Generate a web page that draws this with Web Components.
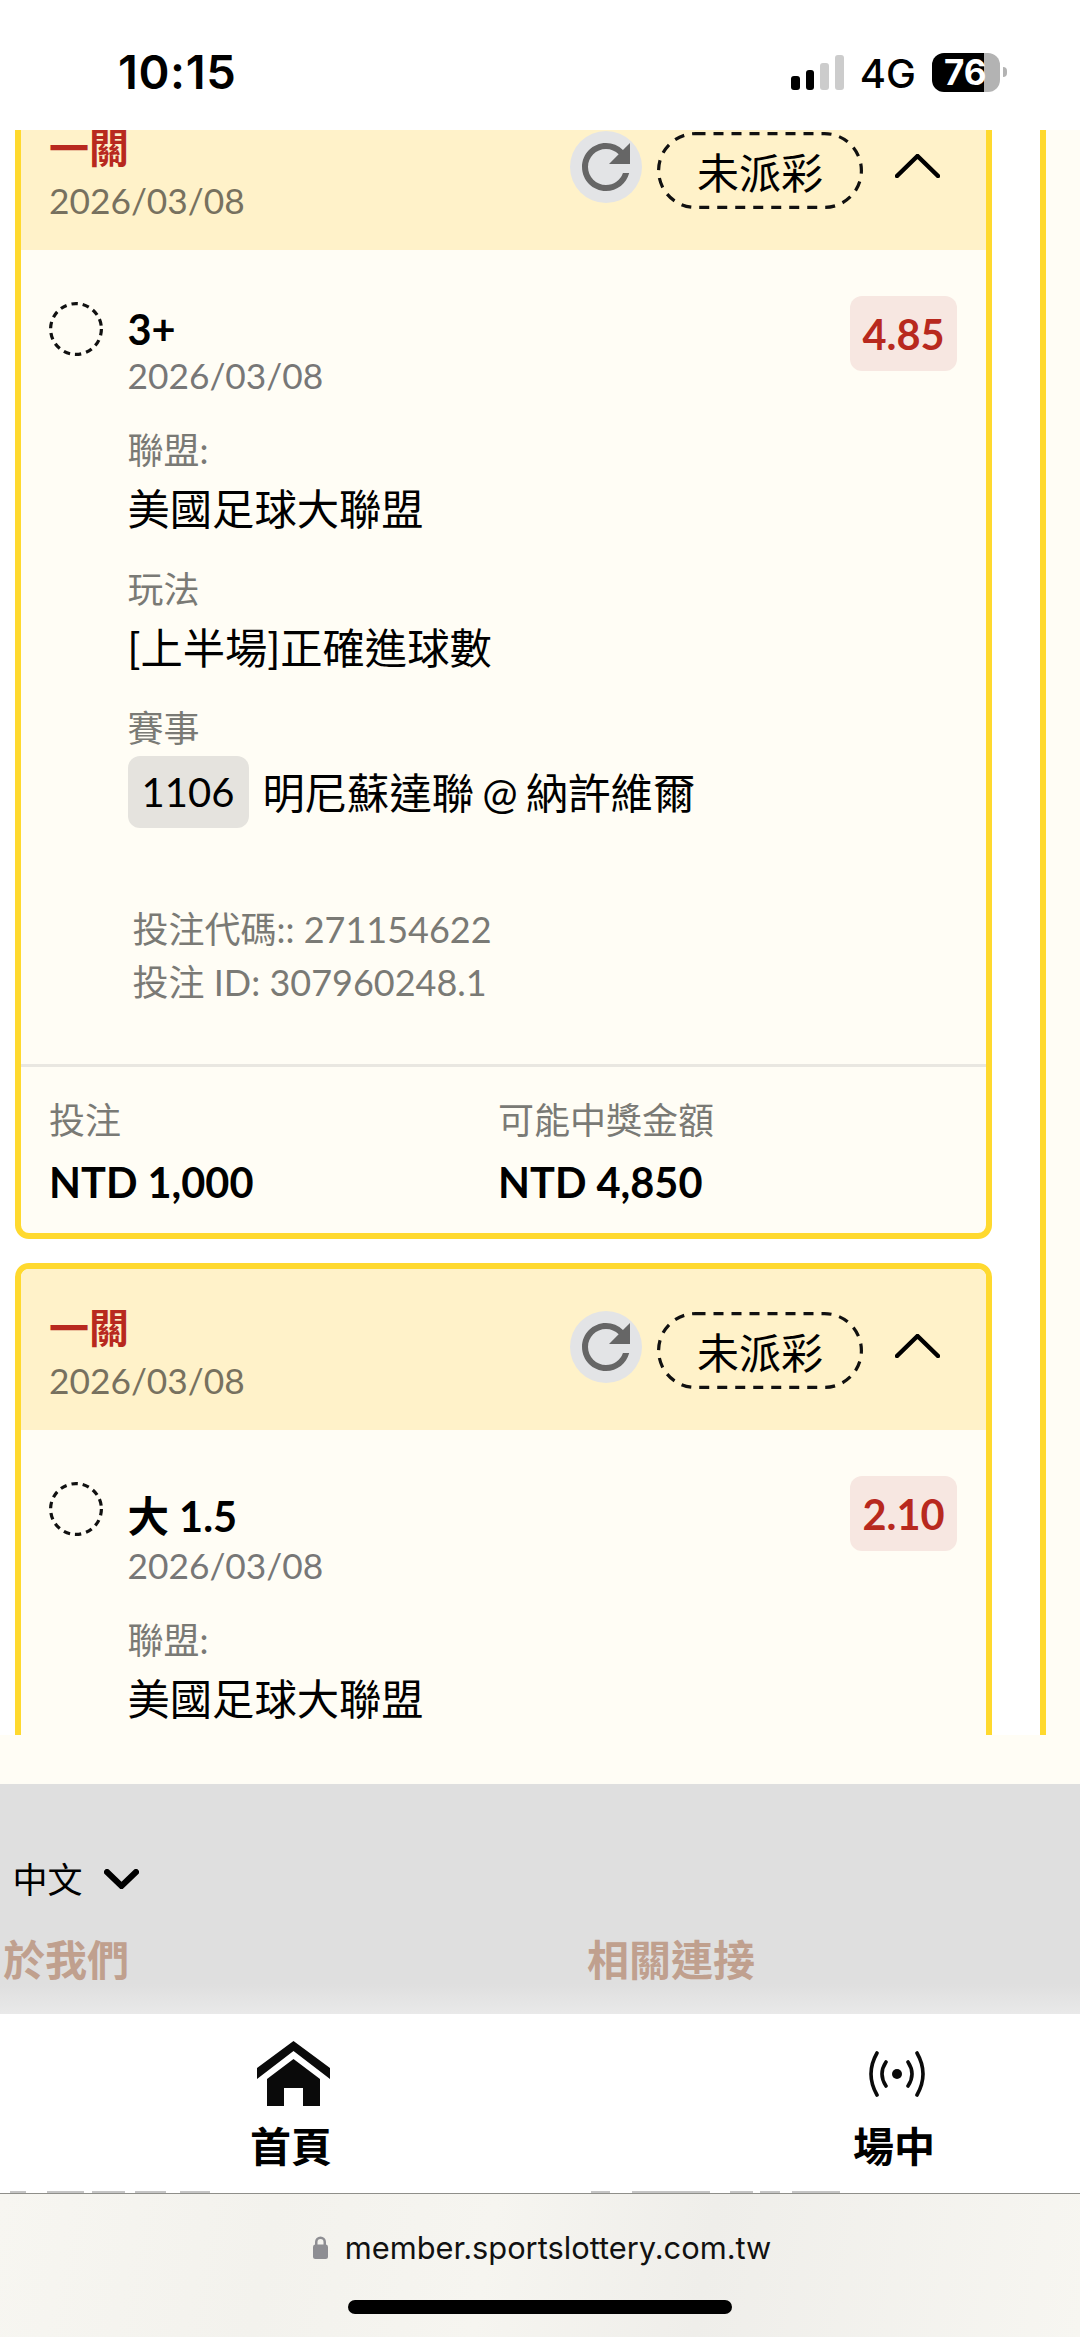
<!DOCTYPE html>
<html lang="zh-Hant"><head><meta charset="utf-8"><title>投注紀錄</title>
<style>
html,body{margin:0;padding:0;background:#fff}
body{font-family:Lato,"Noto Sans CJK TC",sans-serif;color:#000;width:1080px;height:2337px;overflow:hidden}
</style></head><body>
<app-shell>
  <status-bar slot="status"></status-bar>
  <bet-card slot="cards" kind="一關" date="2026/03/08" status="未派彩" style="margin-top:-47px">
    <bet-leg pick="3+" date="2026/03/08" odds="4.85">
      <info-row label="聯盟:">美國足球大聯盟</info-row>
      <info-row label="玩法">[上半場]正確進球數</info-row>
      <info-row label="賽事"><event-tag>1106</event-tag>明尼蘇達聯 @ 納許維爾</info-row>
    </bet-leg>
    <bet-codes code="271154622" bet="307960248.1"></bet-codes>
    <bet-total slot="foot" stake="NTD 1,000" payout="NTD 4,850"></bet-total>
  </bet-card>
  <bet-card slot="cards" kind="一關" date="2026/03/08" status="未派彩" continues>
    <bet-leg pick="大 1.5" date="2026/03/08" odds="2.10">
      <info-row label="聯盟:">美國足球大聯盟</info-row>
    </bet-leg>
  </bet-card>
  <site-footer slot="footer"></site-footer>
  <tab-bar slot="tabs"></tab-bar>
  <url-bar slot="url"></url-bar>
</app-shell>
<script>
const FONT='Lato,"Noto Sans CJK TC",sans-serif';
function def(name,html){
  customElements.define(name,class extends HTMLElement{
    constructor(){super();this.attachShadow({mode:'open'})}
    connectedCallback(){
      const a=n=>this.getAttribute(n)||'';
      this.shadowRoot.innerHTML=typeof html==='function'?html(a):html;
    }
  });
}
def('app-shell',`<style>
:host{display:flex;flex-direction:column;width:1080px;height:2337px;background:#fff;overflow:hidden}
.scroll{flex:none;height:1605px;display:flex;gap:48px;padding-left:15px;overflow:hidden;background:#fff;box-sizing:border-box}
.col{flex:none;width:977px;display:flex;flex-direction:column;gap:24px}
.peek{flex:none;width:200px;border-left:6px solid #ffd92e;background:#fffdf5}
.band{flex:none;height:49px;background:#fffdf5}
</style>
<slot name="status"></slot>
<div class="scroll"><div class="col"><slot name="cards"></slot></div><div class="peek"></div></div>
<div class="band"></div>
<slot name="footer"></slot><slot name="tabs"></slot><slot name="url"></slot>`);

def('status-bar',`<style>
:host{flex:none;display:flex;justify-content:space-between;height:130px;box-sizing:border-box;padding:42px 73px 0 118px;background:#fff;font-family:Inter,sans-serif;color:#000}
.time{font-size:47px;font-weight:600;line-height:60px;letter-spacing:.6px}
.right{display:flex;align-items:center;height:60px}
.sig{display:flex;align-items:flex-end;gap:6px;width:53px;height:35px;margin-right:16px}
.sig i{display:block;width:9px;border-radius:3px;background:#000}
.sig i.off{background:#ccc}
.g{font-size:40px;font-weight:500;line-height:46px;margin-right:16px;position:relative;top:2px}
.bat{width:68px;height:39px;box-sizing:border-box;padding-left:12px;border-radius:12px;background:linear-gradient(90deg,#000 52px,#b3b3b3 52px);color:#fff;font-weight:700;font-size:35px;line-height:39px}
.nub{width:4px;height:10px;margin-left:3px;border-radius:0 5px 5px 0;background:#b3b3b3}
</style>
<div class="time">10:15</div>
<div class="right"><div class="sig"><i style="height:14px"></i><i style="height:20px"></i><i class="off" style="height:27px"></i><i class="off" style="height:35px"></i></div><div class="g">4G</div><div class="bat">76</div><div class="nub"></div></div>`);

def('bet-card',a=>`<style>
:host{display:block;flex:none;box-sizing:border-box;border:6px solid #ffd92e;border-radius:14px;background:#fffdf5;overflow:hidden;font-family:${FONT}}
:host([continues]){min-height:600px}
header{display:flex;justify-content:space-between;height:161px;box-sizing:border-box;padding:30px 46px 0 28px;background:#fff2c9}
.kind{font-size:40px;font-weight:700;line-height:58px;color:#b8291e}
.date{font-size:35.3px;line-height:43px;margin-top:2px;color:#77715f}
.acts{display:flex;align-items:flex-start;margin-top:12px}
.re{width:72px;height:72px;border-radius:50%;background:#e3e4e6;display:block;margin-right:15px}
.re svg{display:block;width:72px;height:72px;fill:#666}
.pill{position:relative;box-sizing:border-box;width:206px;height:77px;margin-top:1px;display:flex;align-items:center;justify-content:center;font-size:42px;color:#000}
.pill svg{position:absolute;left:0;top:0;width:206px;height:77px;fill:none;stroke:#111;stroke-width:3.2;stroke-dasharray:10 8}
.chev{display:block;width:45px;height:24px;margin:23px 0 0 32px;fill:none;stroke:#000;stroke-width:4.5;stroke-linecap:round;stroke-linejoin:round}
.foot{display:block;border-top:3px solid #e9e7e1}
:host([continues]) .foot{display:none}
</style>
<header><div><div class="kind">${a('kind')}</div><div class="date">${a('date')}</div></div>
<div class="acts"><div class="re"><svg viewBox="0 0 24 24"><path d="M17.65 6.35A7.958 7.958 0 0 0 12 4c-4.42 0-7.99 3.58-7.99 8s3.57 8 7.99 8c3.73 0 6.84-2.55 7.73-6h-2.08A5.99 5.99 0 0 1 12 18c-3.31 0-6-2.69-6-6s2.69-6 6-6c1.66 0 3.14.69 4.22 1.78L13 11h7V4l-2.35 2.35z"/></svg></div><div class="pill"><svg viewBox="0 0 206 77"><rect x="1.6" y="1.6" width="202.800" height="73.800" rx="36.900"/></svg>${a('status')}</div><svg class="chev" viewBox="0 0 45 24"><path d="M2 22 22.5 2 43 22"/></svg></div></header>
<slot></slot><div class="foot"><slot name="foot"></slot></div>`);

def('bet-leg',a=>`<style>
:host{display:flex;align-items:flex-start;padding:46px 29px 0 28px;font-family:${FONT}}
.ring{flex:none;display:block;width:54px;height:54px;margin:6px 24.5px 0 0;fill:none;stroke:#111;stroke-width:3.2;stroke-dasharray:6.500 4.930}
.main{flex:1;min-width:0;padding-top:8px}
.pick{font-size:41.5px;font-weight:700;color:#000}
.date{font-size:35.3px;line-height:43px;margin:0 0 27px;color:#777}
.odds{flex:none;width:107px;height:75px;border-radius:12px;background:#f7e7e1;color:#b8291e;font-size:41.5px;font-weight:700;display:flex;align-items:center;justify-content:center}
</style>
<svg class="ring" viewBox="0 0 54 54"><circle cx="27" cy="27" r="25.400"/></svg>
<div class="main"><div class="pick">${a('pick')}</div><div class="date">${a('date')}</div><slot></slot></div>
<div class="odds">${a('odds')}</div>`);

def('info-row',a=>`<style>
:host{display:block;margin-bottom:24px;font-family:${FONT}}
.l{font-size:36px;line-height:52px;color:#7a7a75}
.v{display:flex;align-items:center;font-size:42.3px;line-height:61px;margin-top:2px;color:#000;white-space:pre;word-spacing:-2.5px}
</style><div class="l">${a('label')}</div><div class="v"><slot></slot></div>`);

def('event-tag',`<style>
:host{display:flex;align-items:center;justify-content:center;flex:none;width:121px;height:72px;margin:0 14px 0 0;border-radius:12px;background:#e5e3de;font-size:40px;color:#000;font-family:${FONT}}
</style><slot></slot>`);

def('bet-codes',a=>`<style>
:host{display:block;padding:51px 0 55px 111.500px;font-family:${FONT};font-size:36px;line-height:53px;color:#7a7a75}
</style><div>投注代碼:: ${a('code')}</div><div>投注 ID: ${a('bet')}</div>`);

def('bet-total',a=>`<style>
:host{display:grid;grid-template-columns:449px 1fr;padding:27px 28px 27px;font-family:${FONT}}
.l{font-size:36px;line-height:52px;color:#7a7a75}
.v{font-size:41.5px;font-weight:700;line-height:48px;margin-top:12px;color:#000}
</style><div><div class="l">投注</div><div class="v">${a('stake')}</div></div><div><div class="l">可能中獎金額</div><div class="v">${a('payout')}</div></div>`);

def('site-footer',`<style>
:host{flex:none;display:block;height:230px;box-sizing:border-box;padding:70px 0 0 0;overflow:hidden;background:linear-gradient(#dfdfdf 0,#dfdfdf 200px,#e9e9e9 230px);font-family:${FONT}}
.lang{display:flex;align-items:center;padding-left:12.500px;font-size:35px;line-height:50px;color:#000;height:50px}
.lang svg{display:block;width:35px;height:20px;margin-left:21px;fill:none;stroke:#000;stroke-width:6;stroke-linejoin:miter;stroke-linecap:round}
.links{display:grid;grid-template-columns:584px 1fr;padding:26px 0 0 3px;font-size:42px;font-weight:700;line-height:61px;color:#c0a08e}
</style>
<div class="lang">中文<svg viewBox="0 0 35 20"><path d="M3 3 17.5 17 32 3"/></svg></div>
<div class="links"><div>於我們</div><div>相關連接</div></div>`);

def('tab-item',a=>`<style>
:host{display:flex;flex-direction:column;align-items:center;width:82px;font-family:${FONT}}
.i{height:66px;display:flex;align-items:center;justify-content:center;padding-left:5px}
.t{margin-top:11px;font-size:41px;font-weight:700;line-height:58px;white-space:nowrap;color:#000}
</style><div class="i"><slot></slot></div><div class="t">${a('label')}</div>`);

def('tab-bar',`<style>
:host{flex:none;display:flex;flex-direction:column;justify-content:space-between;height:179px;background:#fff;box-sizing:border-box;padding-top:27px}
.items{display:flex;gap:521px;padding-left:250px}
svg{display:block}
.strip{display:flex;height:2px}
.strip i{display:block;height:2px;background:#c4c4c4}
.strip b{display:block;height:2px}
</style>
<div class="items">
<tab-item label="首頁"><svg width="74" height="66" viewBox="0 0 74 66" fill="#0a0a0a"><path d="M36.500 0 73 27v11L36.500 10 0 38V27z"/><path d="M36.500 18 63 38v27H46V47H27v18H10V38z"/></svg></tab-item>
<tab-item label="場中"><svg width="58" height="46" viewBox="0 0 58 46" fill="none" stroke="#0a0a0a" stroke-width="3.600" stroke-linecap="round"><circle cx="29" cy="23" r="5" fill="#0a0a0a" stroke="none"/><path d="M18 11Q10 23 18 35M40 11Q48 23 40 35M9 2Q-3 23 9 44M49 2Q61 23 49 44"/></svg></tab-item>
</div>
<div class="strip"><b style="width:10px"></b><i style="width:16px"></i><b style="width:21px"></b><i style="width:37px"></i><b style="width:8px"></b><i style="width:33px"></i><b style="width:10px"></b><i style="width:31px"></i><b style="width:14px"></b><i style="width:30px"></i><b style="width:381px"></b><i style="width:19px"></i><b style="width:22px"></b><i style="width:78px"></i><b style="width:20px"></b><i style="width:23px"></i><b style="width:7px"></b><i style="width:20px"></i><b style="width:12px"></b><i style="width:48px"></i></div>`);

def('url-bar',`<style>
:host{flex:none;display:block;height:144px;box-sizing:border-box;border-top:1px solid #8f8f8a;padding-top:33px;background:linear-gradient(100deg,#f7f6f1 0,#f3f2ed 25%,#f6f5f0 45%,#efeeea 65%,#f7f6f1 100%)}
.row{display:flex;justify-content:center;align-items:center;height:40px;gap:16px;padding-left:3px;font-family:Inter,sans-serif;font-size:30.8px;color:#111;white-space:nowrap}
svg{display:block;fill:#8e8e93}
.home{width:384px;height:14px;margin:33px auto 0;border-radius:7px;background:#000}
</style>
<div class="row"><svg width="17" height="23" viewBox="0 0 17 23"><path d="M1 11a2.500 2.500 0 0 1 2-2.400V6a5.500 5.500 0 0 1 11 0v2.600a2.500 2.500 0 0 1 2 2.400v9.500a2.500 2.500 0 0 1-2.500 2.500h-10A2.500 2.500 0 0 1 1 20.500zM5.500 8.500h6V6a3 3 0 0 0-6 0z"/></svg><span>member.sportslottery.com.tw</span></div>
<div class="home"></div>`);
</script>
</body></html>
